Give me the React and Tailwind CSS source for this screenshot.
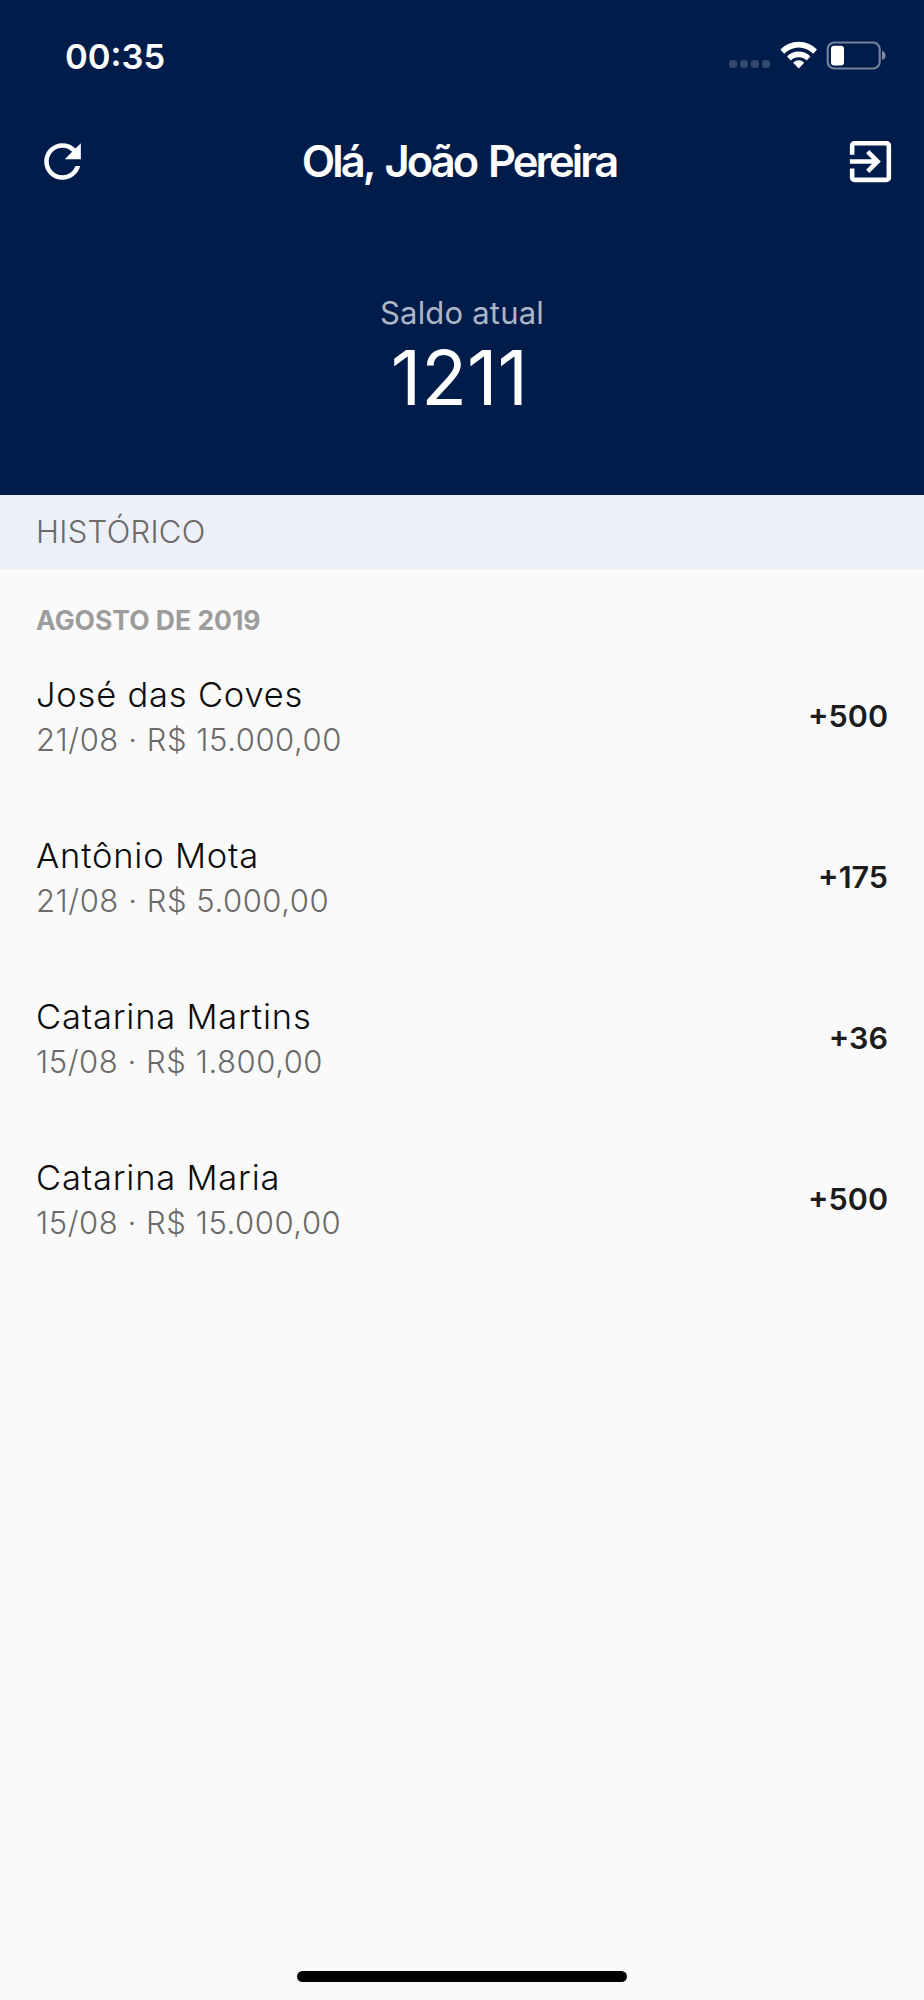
import React from "react";
import { MdExitToApp, MdRefresh } from "react-icons/md";

const user = { name: "João Pereira", balance: 1211 };

const transactions = [
  { id: 1, name: "José das Coves", date: "21/08", value: "R$ 15.000,00", points: 500 },
  { id: 2, name: "Antônio Mota", date: "21/08", value: "R$ 5.000,00", points: 175 },
  { id: 3, name: "Catarina Martins", date: "15/08", value: "R$ 1.800,00", points: 36 },
  { id: 4, name: "Catarina Maria", date: "15/08", value: "R$ 15.000,00", points: 500 },
];

function WifiIcon() {
  return (
    <svg className="ml-[10px] h-7 w-[38px]" viewBox="0 0 38 28" fill="currentColor">
      <path d="M0.4 8.4A25.6 25.6 0 0 1 37 8.4L33.2 12.8A20 20 0 0 0 4.2 12.8Z" />
      <path d="M7 15.6A16 16 0 0 1 30.4 15.6L26.6 19.4A11.2 11.2 0 0 0 10.8 19.4Z" />
      <path d="M13.2 21.8A7.4 7.4 0 0 1 24.2 21.8L18.7 27.6Z" />
    </svg>
  );
}

function BatteryIcon() {
  return (
    <svg className="ml-2 h-[29px] w-[60px]" viewBox="0 0 60 29" fill="none">
      <rect x="1.7" y="1.5" width="52" height="26" rx="6.5" stroke="#fff" strokeOpacity="0.45" strokeWidth="2.2" />
      <rect x="5" y="4.7" width="13" height="19.8" rx="3.2" fill="#fff" />
      <path d="M56 9.7C60.8 11.6 60.8 17.2 56 19.1Z" fill="#fff" fillOpacity="0.5" />
    </svg>
  );
}

function StatusBar() {
  return (
    <div className="flex h-[111px] items-start justify-between pr-[38px] pl-[65px]">
      <span className="mt-[37px] text-[34.5px] leading-[40px] font-semibold">00:35</span>
      <div className="mt-[41px] flex items-start">
        <div className="mt-[19px] flex gap-[3px]">
          <span className="size-[8px] rounded-[3px] bg-white/20" />
          <span className="size-[8px] rounded-[3px] bg-white/20" />
          <span className="size-[8px] rounded-[3px] bg-white/20" />
          <span className="size-[8px] rounded-[3px] bg-white/20" />
        </div>
        <WifiIcon />
        <BatteryIcon />
      </div>
    </div>
  );
}

function Header() {
  return (
    <header className="h-[495px] bg-[#001c4a] text-white">
      <StatusBar />
      <div className="flex h-[100px] items-center justify-between pr-[26px] pl-[35px]">
        <button>
          <MdRefresh className="size-[55px]" />
        </button>
        <h1 className="mr-[15px] text-[43.5px] leading-[50px] font-semibold tracking-[-2.9px] [word-spacing:3.5px]">
          Olá, {user.name}
        </h1>
        <button>
          <MdExitToApp className="size-[55px]" />
        </button>
      </div>
      <div className="flex flex-col items-center pt-[82px]">
        <span className="text-[31px] leading-[40px] tracking-[0.2px] text-[#adb6c6]">
          Saldo atual
        </span>
        <span className="mt-[5px] mr-[5px] text-[75px] leading-[80px]">
          {user.balance}
        </span>
      </div>
    </header>
  );
}

function TransactionItem({ transaction }) {
  return (
    <li className="flex h-[161px] items-start justify-between">
      <div className="flex flex-col">
        <span className="text-[34.5px] leading-[44px] font-light tracking-[0.8px] text-[#0c0c0c]">
          {transaction.name}
        </span>
        <span className="mt-px text-[31px] leading-[44px] font-light tracking-[0.55px] text-[#6a6a6a]">
          {transaction.date} · {transaction.value}
        </span>
      </div>
      <span className="mt-[21px] text-[30.5px] leading-[44px] font-semibold text-[#1c1c1c]">
        +{transaction.points}
      </span>
    </li>
  );
}

function App() {
  return (
    <div className="flex h-[2000px] w-[924px] flex-col bg-[#fafafa] font-['Inter',sans-serif]">
      <Header />
      <div className="flex h-[74px] items-center bg-[#edf0f9] px-[36px]">
        <h2 className="text-[31px] leading-[40px] font-light tracking-[0.3px] text-[#6a6a6a]">
          HISTÓRICO
        </h2>
      </div>
      <main className="flex-1 px-[36px] pt-[31px]">
        <h3 className="text-[26.5px] leading-[40px] font-bold text-[#9c9c9c]">
          AGOSTO DE 2019
        </h3>
        <ul className="mt-[33px]">
          {transactions.map((transaction) => (
            <TransactionItem key={transaction.id} transaction={transaction} />
          ))}
        </ul>
      </main>
      <div className="flex justify-center pb-[18px]">
        <div className="h-[11px] w-[330px] rounded-full bg-black" />
      </div>
    </div>
  );
}

export default App;
